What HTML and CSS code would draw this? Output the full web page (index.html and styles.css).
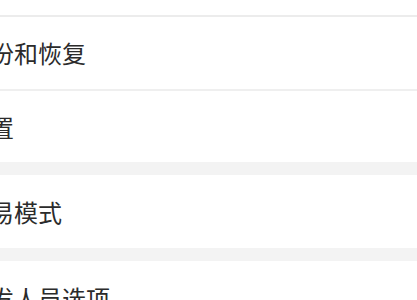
FILE: index.html
```html
<!DOCTYPE html>
<html lang="zh-CN">
<head>
<meta charset="utf-8">
<link rel="stylesheet" href="styles.css">
</head>
<body>
<div class="page">
  <div class="prev"></div>
  <div class="group first">
    <div class="row row-a"><span class="label">备份和恢复</span></div>
    <div class="row"><span class="label">重置</span></div>
  </div>
  <div class="gap"></div>
  <div class="group">
    <div class="row"><span class="label">简易模式</span></div>
  </div>
  <div class="gap"></div>
  <div class="group">
    <div class="row"><span class="label">开发人员选项</span></div>
  </div>
</div>
</body>
</html>
```
FILE: styles.css
```css
html, body {
  margin: 0;
  padding: 0;
  background: #ffffff;
  overflow: hidden;
}
.page {
  display: flex;
  flex-direction: column;
  font-family: "Noto Sans CJK SC", "Noto Sans", sans-serif;
  color: #2b2b2b;
}
.prev {
  height: 15px;
  background: #fff;
}
.group {
  display: flex;
  flex-direction: column;
  background: #fff;
}
.group.first {
  border-top: 2px solid #ececec;
}
.row {
  height: 73px;
  display: flex;
  align-items: center;
  border-top: 2px solid #efefef;
  box-sizing: border-box;
}
.group .row:first-child {
  border-top: none;
}
.row-a {
  height: 72px;
}
.label {
  margin-left: -34px;
  font-size: 24px;
  line-height: 1;
  white-space: nowrap;
}
.gap {
  height: 13px;
  background: #f3f3f3;
}
```
